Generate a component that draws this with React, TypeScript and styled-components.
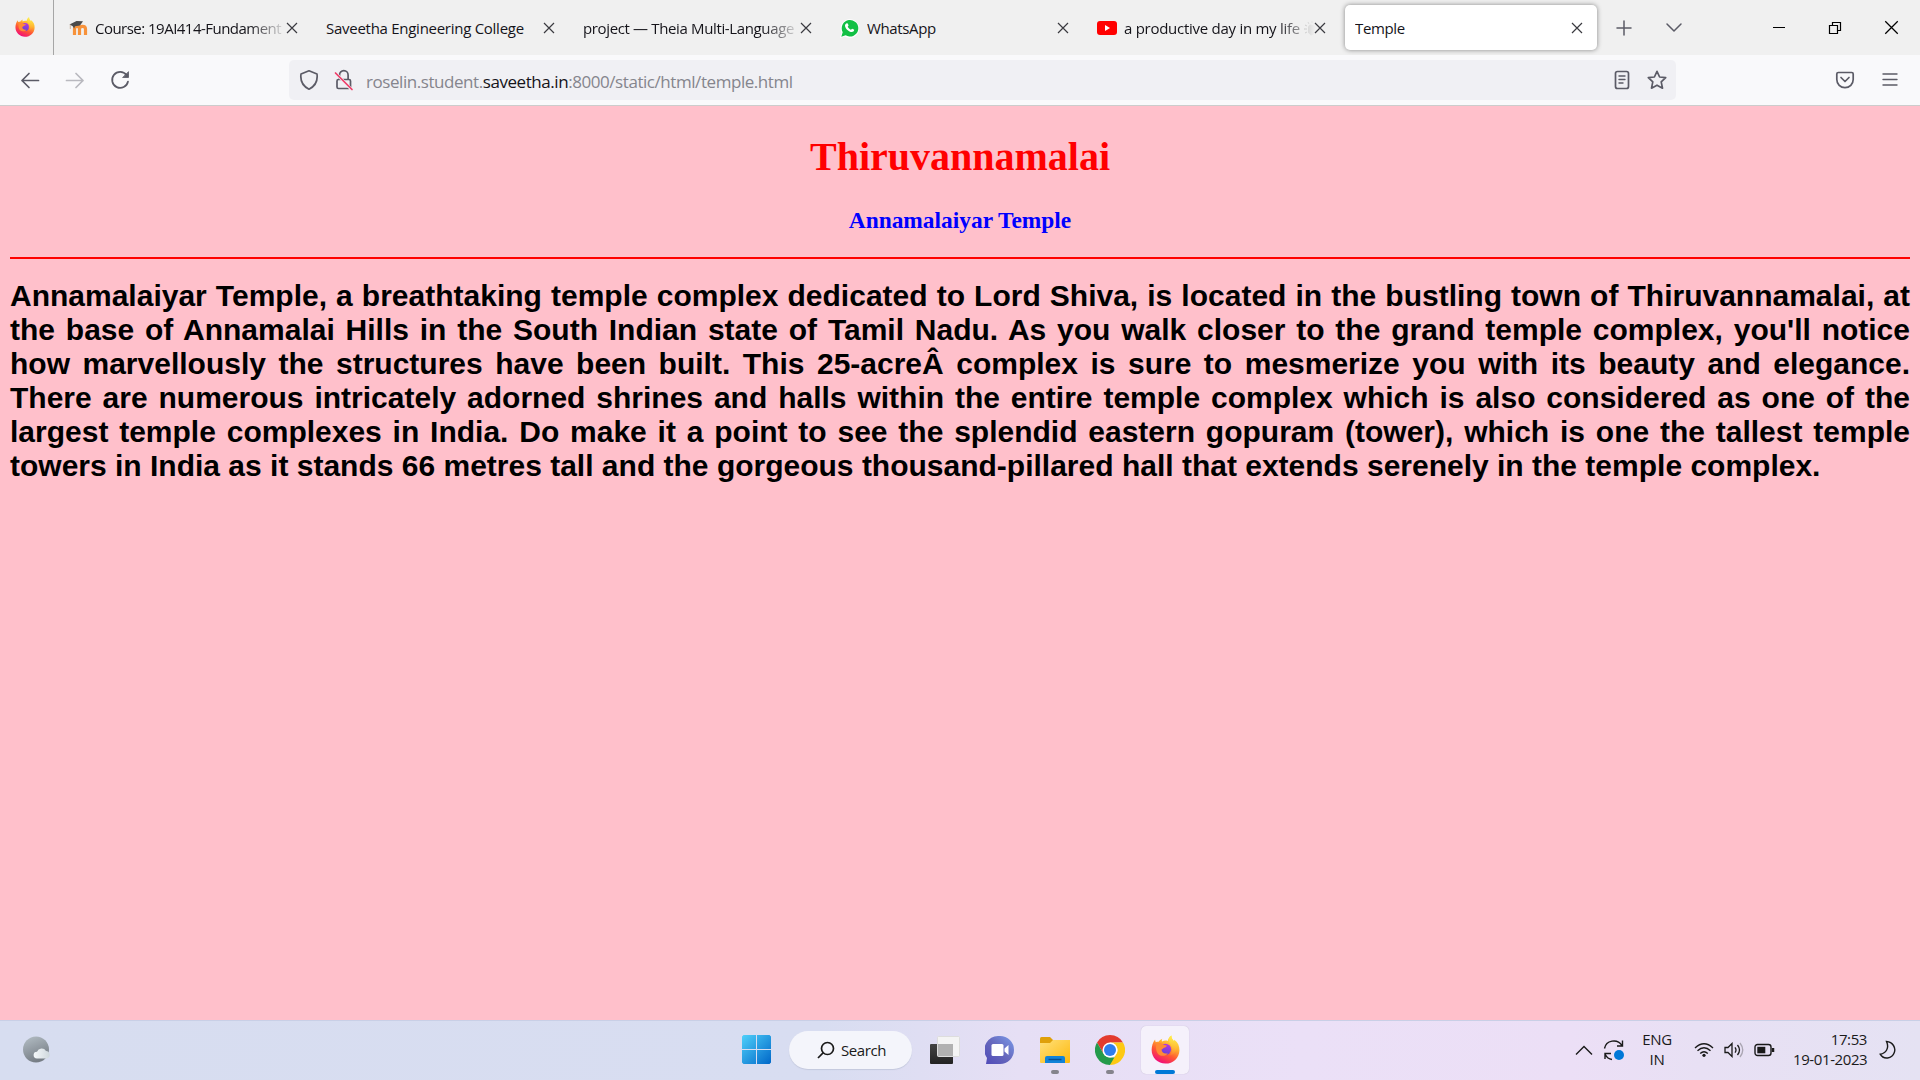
import React from "react";
import styled, { createGlobalStyle, css } from "styled-components";

const Global = createGlobalStyle`
  *{box-sizing:border-box}
  html,body{margin:0;padding:0}
  body{width:1920px;height:1080px;overflow:hidden;background:#ffc0cb;font-family:"Open Sans","Noto Sans",sans-serif}
  svg{display:block;flex:none}
`;

const Screen = styled.div`width:1920px;height:1080px;display:flex;flex-direction:column;`;

const TabStrip = styled.div`height:55px;background:#f0f0f0;display:flex;align-items:center;flex:none;`;
const Home = styled.div`width:54px;height:55px;border-right:1px solid #a6a6a6;padding:17px 0 0 15px;flex:none;`;
const Tabs = styled.div`display:flex;padding-left:6px;gap:5px;`;
const Tab = styled.div<{ $active?: boolean }>`
  width:252px;height:45px;border-radius:5px;padding:0 14px 0 9px;display:flex;align-items:center;
  ${(p) => p.$active && css`background:#fff;box-shadow:0 0 5px rgba(0,0,0,.45);padding-left:10px;`}
`;
const TabIcon = styled.span<{ $gap?: number }>`display:flex;width:19px;margin-right:${(p) => p.$gap ?? 8}px;flex:none;`;
const TabLabel = styled.span<{ $fade?: boolean; $ls?: number }>`
  flex:1;min-width:0;overflow:hidden;white-space:nowrap;font-size:15px;line-height:24px;color:#15141a;padding-top:1px;
  letter-spacing:${(p) => p.$ls ?? -0.36}px;
  ${(p) => p.$fade && css`margin-right:-1px;mask-image:linear-gradient(to right,#000 calc(100% - 38px),transparent 100%);`}
`;
const Spacer = styled.div`flex:1;`;
const StripButtons = styled.div`display:flex;align-items:center;gap:32px;padding-left:18px;`;
const WindowButtons = styled.div`display:flex;align-items:center;gap:42px;padding-right:21px;`;

const NavBar = styled.div`height:51px;background:#f9f9fb;border-bottom:1px solid #ccc;display:flex;align-items:center;flex:none;`;
const NavButtons = styled.div`display:flex;gap:25px;padding-left:20px;width:289px;`;
const UrlBar = styled.div`width:1387px;height:40px;border-radius:5px;background:#f0f0f4;display:flex;align-items:center;padding:0 9px 0 10px;`;
const Url = styled.span`font-size:17px;letter-spacing:-.44px;color:#85858d;white-space:nowrap;margin-left:12px;padding-top:2px;`;
const Host = styled.span`color:#15141a;`;
const UrlIcons = styled.div`display:flex;gap:15px;`;
const NavRight = styled.div`display:flex;gap:25px;margin-left:159px;align-items:center;`;

const Page = styled.main`flex:1;background:#ffc0cb;padding:0 10px;`;
const Title = styled.h1`margin:28px 0 0;font:bold 40px/46px "Liberation Serif","Times New Roman",serif;color:#f00;text-align:center;`;
const Subtitle = styled.h3`margin:27px 0 0;font:bold 23.4px/27px "Liberation Serif","Times New Roman",serif;color:#00f;text-align:center;`;
const Rule = styled.hr`margin:23px 0 0;border:0;height:2px;background:#f00;`;
const Story = styled.p`margin:20px 0 0;font:bold 30px/34px "Liberation Sans",Arial,sans-serif;color:#000;text-align:justify;`;

const Taskbar = styled.footer`
  height:60px;flex:none;display:flex;align-items:center;border-top:1px solid #c9cfe6;padding-bottom:2px;
  background:linear-gradient(90deg,#d7ddf0 0,#d8ddf1 820px,#e6dff5 1020px,#ebe0f7 1300px,#ecdff6 1570px,#e8e0f4 1700px,#e5e2f3 1920px);
`;
const Left = styled.div`width:742px;padding-left:22px;flex:none;`;
const Search = styled.div`
  width:123px;height:38px;border-radius:19px;background:#f4f5fb;box-shadow:0 1px 1px #c4c9dd;display:flex;align-items:center;
  padding-left:28px;gap:6px;margin:0 18px;font-size:15px;letter-spacing:-.4px;color:#1a1a1a;
`;
const Apps = styled.div`display:flex;align-items:center;`;
const AppButton = styled.div<{ $w: number; $active?: boolean; $bar?: string; $bw?: number }>`
  width:${(p) => p.$w}px;height:48px;display:flex;flex-direction:column;align-items:center;padding-top:9px;
  ${(p) => p.$active && css`background:#f5f1fb;border-radius:5px;box-shadow:0 0 1px #b8b0c8;margin-left:-9px;`}
  &::after{content:"";margin-top:auto;width:${(p) => p.$bw ?? 0}px;height:4px;border-radius:2px;background:${(p) => p.$bar ?? "none"};}
`;
const Tray = styled.div`display:flex;align-items:center;color:#1a1a1a;font-size:15px;line-height:20px;padding-right:24px;`;
const Lang = styled.div`width:30px;text-align:center;margin:-2px 22px 0 17px;letter-spacing:-.3px;`;
const Clock = styled.div`width:74px;text-align:right;margin:-2px 12px 0 18px;letter-spacing:-.4px;white-space:nowrap;`;
const TrayIcons = styled.div`display:flex;align-items:center;gap:10px;`;

const Firefox = ({ size, id }: { size: number; id: string }) => (
  <svg width={size} height={size} viewBox="0 0 32 32">
    <defs>
      <linearGradient id={id + "a"} x1=".8" y1="0" x2=".3" y2="1">
        <stop offset="0" stopColor="#fff44f" /><stop offset=".35" stopColor="#ffb22e" /><stop offset=".65" stopColor="#ff5634" /><stop offset="1" stopColor="#f0087f" />
      </linearGradient>
      <linearGradient id={id + "b"} x1=".7" y1="0" x2=".3" y2="1">
        <stop offset="0" stopColor="#b833e1" /><stop offset="1" stopColor="#5b45d6" />
      </linearGradient>
      <linearGradient id={id + "c"} x1="0" y1="0" x2="0" y2="1">
        <stop offset="0" stopColor="#fff04a" /><stop offset="1" stopColor="#ffa72e" stopOpacity=".2" />
      </linearGradient>
    </defs>
    <path fill={`url(#${id}a)`} d="M4.500 5c0 1 .2 2 .8 3 1-.5 2-.6 3-.5C9.300 5.800 10.500 5 12.500 4c-.6 1.300-.7 2.300-.3 3.200 2-1 4.200-1.300 6.300-.7C19 4 20 2 22.500.5c0 3 1.200 4.500 3 6.300.3-.5.300-1 .2-1.500C30 8.500 31.500 12.500 31.400 17 31 25.500 24.500 31.500 16 31.500S.7 25 .7 16.500C.7 12.500 2 8 4.500 5z" />
    <circle cx="16" cy="15.800" r="6.200" fill={`url(#${id}b)`} />
    <path fill="#ff8a35" d="M6 10c2-1.800 5.500-1.600 7.100.3 1 .9 2.400 1 4.400 1.200 0 1.300-1.600 2-3 2.500-1.300.6-1.800 1.600-2.900 2 .3 3.500 3.500 5.300 6.900 4-2 3.400-7.400 4-10.400 1.200C5.800 19 5 14 6 10z" />
    <path fill={`url(#${id}c)`} d="M22.500.5c-3 2-3.500 5-2.500 7.500 1 2 3.300 3.500 3.300 8 0 3-1.300 5-3 6.500 5.700-1 8.700-5.500 8.200-10.500-.3-3-1.800-5-2.800-6.700l-.2 1.500c-1.800-1.800-3-3.300-3-6.300z" />
  </svg>
);
const X = ({ s = 12, c = "#3a3a40", w = 1.2 }: { s?: number; c?: string; w?: number }) => (
  <svg width={s} height={s} viewBox="0 0 12 12" stroke={c} strokeWidth={w} fill="none"><path d="M1 1l10 10M11 1L1 11" /></svg>
);
const line = { fill: "none", stroke: "#5b5b66", strokeWidth: 1.7, strokeLinecap: "round", strokeLinejoin: "round" } as const;

const Moodle = () => (
  <svg width="19" height="16" viewBox="0 0 19 16">
    <path d="M5.500 15V9c0-3.500 5-3.500 5 0v6m0-6c0-3.500 6-3.500 6 0v6" fill="none" stroke="#f7923a" strokeWidth="3.200" />
    <path d="M.5 4.500L7.500 1l6.500.3-3 4.200-5 .8-.8 2.200L3.500 6z" fill="#4b4b4b" /><path d="M1.300 4.500V9" stroke="#c9a789" strokeWidth=".8" />
  </svg>
);
const WhatsApp = () => (
  <svg width="19" height="20" viewBox="0 0 19 20">
    <path d="M0 20l1.600-5.200A9.300 9.300 0 1 1 5 18.500z" fill="#fff" />
    <path d="M1.300 18.700l1.400-4.500A8.300 8.300 0 1 1 5.600 17.300z" fill="#12c045" />
    <path d="M6.700 5.300c.7-.3 1.100 0 1.800 2 .1.500-.6 1-.8 1.500.8 1.500 1.800 2.300 3.200 2.900.5-.2.900-1.100 1.300-1 .5 0 1.800.8 2 1.100 0 1.400-1.300 2.200-2.300 2.200-3.200-.2-6.300-3.200-6.900-6.100-.1-1 .7-2.300 1.700-2.600z" fill="#fff" />
  </svg>
);
const YouTube = () => (
  <svg width="20" height="14" viewBox="0 0 20 14"><rect width="20" height="14" rx="3" fill="#f00" /><path d="M8 4l5 3-5 3z" fill="#fff" /></svg>
);
const HandsGlyph = styled.svg`&&{display:inline-block;vertical-align:-2px;}`;
const Hands = () => (
  <HandsGlyph width="14" height="15" viewBox="0 0 14 15">
    <path d="M4 5.500l2-2 5 1v8l-4 2-3-3z" fill="#777" /><path d="M1 4l2 1M4 1l1 2M8 0v2M0 8h3M1 12l2-1" stroke="#666" />
  </HandsGlyph>
);

const tabs = [
  { label: "Course: 19AI414-Fundament", icon: <Moodle />, gap: 7, fade: true, ls: -0.52 },
  { label: "Saveetha Engineering College", ls: -0.27 },
  { label: "project — Theia Multi-Language", fade: true, ls: -0.36 },
  { label: "WhatsApp", icon: <WhatsApp />, ls: -0.36 },
  { label: "a productive day in my life ", icon: <YouTube />, fade: true, ls: -0.27, tail: <Hands /> },
  { label: "Temple", active: true, ls: -0.36 },
];

export default function App() {
  return (
    <Screen>
      <Global />
      <TabStrip>
        <Home><Firefox size={20} id="ft" /></Home>
        <Tabs>
          {tabs.map((t) => (
            <Tab key={t.label} $active={t.active}>
              {t.icon && <TabIcon $gap={t.gap}>{t.icon}</TabIcon>}
              <TabLabel $fade={t.fade} $ls={t.ls}>{t.label}{t.tail}</TabLabel>
              <X />
            </Tab>
          ))}
        </Tabs>
        <StripButtons>
          <svg width="18" height="18" {...line} strokeWidth={1.5}><path d="M9 2v14M2 9h14" /></svg>
          <svg width="18" height="18" {...line} strokeWidth={1.5}><path d="M2 5l7 7 7-7" /></svg>
        </StripButtons>
        <Spacer />
        <WindowButtons>
          <svg width="14" height="14"><path d="M1 6.500h12" stroke="#000" /></svg>
          <svg width="14" height="14" fill="none" stroke="#000" strokeWidth="1.200"><path d="M1.500 4.500h8v8h-8zM4.500 4.500v-3h8v8h-3" /></svg>
          <X s={15} c="#000" w={1} />
        </WindowButtons>
      </TabStrip>
      <NavBar>
        <NavButtons>
          <svg width="20" height="20" {...line}><path d="M18.500 10.500H2M9 3.500l-7 7 7 7" /></svg>
          <svg width="20" height="20" {...line} opacity=".4"><path d="M1.500 10.500H18M11 3.500l7 7-7 7" /></svg>
          <svg width="20" height="20" {...line}><path d="M16.500 5A8 8 0 1 0 18 11.500" /><path d="M18.500 2v5.500H13z" fill="#5b5b66" strokeWidth=".8" /></svg>
        </NavButtons>
        <UrlBar>
          <svg width="20" height="22" {...line}><path d="M10 1.800l8 3.200c.8 6-1.500 12-8 15.200C3.500 17 1.200 11 2 5z" /></svg>
          <svg width="35" height="22" viewBox="-15 0 35 22" {...line}>
            <rect x="3" y="10.500" width="13.500" height="9" rx="1.500" /><path d="M5.500 10V6a4.300 4.300 0 0 1 8.600 0v4" />
            <path d="M1 3.500l16.500 17" stroke="#f0f0f4" strokeWidth="3" /><path d="M1.500 4l16.500 16.500" stroke="#ef3d68" />
          </svg>
          <Url>roselin.student.<Host>saveetha.in</Host>:8000/static/html/temple.html</Url>
          <Spacer />
          <UrlIcons>
            <svg width="20" height="20" {...line}><rect x="3.500" y="1.500" width="13" height="17" rx="2" /><path d="M7 6h6M7 9.500h6M7 13h4" strokeWidth="1.400" /></svg>
            <svg width="20" height="20" {...line}><path d="M10 1.300l2.600 5.700 6.100.6-4.500 4.300 1.300 6.300L10 15.200l-5.500 3 1.300-6.300L1.300 7.600 7.400 7z" /></svg>
          </UrlIcons>
        </UrlBar>
        <NavRight>
          <svg width="20" height="20" {...line}><path d="M3.300 2.500h13.400c.9 0 1.500.6 1.500 1.500v5.500a8.200 8.200 0 0 1-16.400 0V4c0-.9.600-1.500 1.500-1.500z" /><path d="M6 7.500l4 4 4-4" /></svg>
          <svg width="20" height="20" {...line} strokeWidth={1.4}><path d="M3 4h14M3 9.500h14M3 15h14" /></svg>
        </NavRight>
      </NavBar>

      <Page>
        <Title>Thiruvannamalai</Title>
        <Subtitle>Annamalaiyar Temple</Subtitle>
        <Rule />
        <Story>
          Annamalaiyar Temple, a breathtaking temple complex dedicated to Lord Shiva, is located in the bustling town of Thiruvannamalai, at the base of Annamalai Hills in the South Indian state of Tamil Nadu. As you walk closer to the grand temple complex, you'll notice how marvellously the structures have been built. This 25-acreÂ complex is sure to mesmerize you with its beauty and elegance. There are numerous intricately adorned shrines and halls within the entire temple complex which is also considered as one of the largest temple complexes in India. Do make it a point to see the splendid eastern gopuram (tower), which is one the tallest temple towers in India as it stands 66 metres tall and the gorgeous thousand-pillared hall that extends serenely in the temple complex.
        </Story>
      </Page>

      <Taskbar>
        <Left>
          <svg width="30" height="28">
            <defs><linearGradient id="moon" x1="0" y1="0" x2=".4" y2="1"><stop stopColor="#b5bfc6" /><stop offset="1" stopColor="#777e86" /></linearGradient>
              <linearGradient id="cloud"><stop stopColor="#f5f8fa" /><stop offset="1" stopColor="#cfd8dd" /></linearGradient></defs>
            <circle cx="14" cy="13.500" r="13" fill="url(#moon)" />
            <path d="M15 22.500a3.400 3.400 0 0 1 0-6.800 5 5 0 0 1 9-.8 3.900 3.900 0 0 1 1 7.600z" fill="url(#cloud)" />
          </svg>
        </Left>
        <svg width="29" height="29">
          <defs><linearGradient id="win" x1="0" y1="0" x2="1" y2="1"><stop stopColor="#4fd0fa" /><stop offset="1" stopColor="#0067c8" /></linearGradient></defs>
          <path fill="url(#win)" d="M1.500 0H14v14H0V1.500zM15 0h12.500L29 1.500V14H15zM0 15h14v14H1.500L0 27.500zM15 15h14v12.500L27.500 29H15z" />
        </svg>
        <Search>
          <svg width="18" height="18" fill="none" stroke="#1a1a1a" strokeWidth="1.700"><circle cx="10.500" cy="7.500" r="6" /><path d="M6.300 11.700L1 17" /></svg>
          <span>Search</span>
        </Search>
        <Apps>
          <AppButton $w={30}>
            <svg width="30" height="30">
              <defs><linearGradient id="dk" x1="0" y1="0" x2="0" y2="1"><stop stopColor="#444" /><stop offset="1" stopColor="#222" /></linearGradient></defs>
              <rect y="9" width="23" height="20" rx="1" fill="url(#dk)" /><rect x="7.500" y="1.500" width="22" height="20" rx="1" fill="#f4f4f4" stroke="#ddd" /><path d="M8 9h15v12H8z" fill="#b1b1b1" />
            </svg>
          </AppButton>
          <AppButton $w={80}>
            <svg width="30" height="30">
              <defs><linearGradient id="chat" x1="1" y1="0" x2="0" y2="1"><stop stopColor="#7b9cea" /><stop offset=".5" stopColor="#6668bd" /><stop offset="1" stopColor="#4f4ab8" /></linearGradient></defs>
              <path d="M15 1a14 14 0 0 1 0 28H1l1-6A14 14 0 0 1 15 1z" fill="url(#chat)" /><rect x="6.500" y="9" width="12" height="12" rx="1.500" fill="#fff" /><path d="M19.500 13.500l4-3.500v10l-4-3.500z" fill="#fff" />
            </svg>
          </AppButton>
          <AppButton $w={30} $bar="#85848c" $bw={8}>
            <svg width="30" height="30">
              <defs><linearGradient id="fold" x1="0" y1="0" x2="1" y2="1"><stop stopColor="#ffe07a" /><stop offset="1" stopColor="#fdb90d" /></linearGradient></defs>
              <path d="M0 3.500Q0 2 1.500 2H10l3 3v5H0z" fill="#dfa009" /><path d="M0 8h10l3-3h17v22q0 1-1 1H1q-1 0-1-1z" fill="url(#fold)" />
              <path d="M5 28v-5q0-2 2-2h16q2 0 2 2v5z" fill="#1183d8" /><path d="M8.500 24.500h13" stroke="#084f91" strokeWidth="1.400" />
            </svg>
          </AppButton>
          <AppButton $w={80} $bar="#85848c" $bw={8}>
            <svg width="30" height="30" viewBox="0 0 30 30">
              <path d="M15 0a15 15 0 0 1 13 7.500H15L8.500 18.700 2 7.500A15 15 0 0 1 15 0z" fill="#e33b2e" />
              <path d="M2 7.500l6.500 11.250A7.500 7.500 0 0 0 15 22.500h6.500L15 30A15 15 0 0 1 2 7.500z" fill="#249a4b" />
              <path d="M28 7.500A15 15 0 0 1 15 30l6.500-11.250A7.500 7.500 0 0 0 15 7.500z" fill="#fdc913" />
              <circle cx="15" cy="15" r="7.500" fill="#fff" /><circle cx="15" cy="15" r="6" fill="#2f7ded" />
            </svg>
          </AppButton>
          <AppButton $w={48} $active $bar="#0078d7" $bw={20}><Firefox size={29} id="fb" /></AppButton>
        </Apps>
        <Spacer />
        <Tray>
          <TrayIcons>
            <svg width="18" height="12" fill="none" stroke="#1a1a1a" strokeWidth="1.400"><path d="M1 10.500L9 2.500l8 8" /></svg>
            <svg width="22" height="22" fill="none" stroke="#1a1a1a" strokeWidth="1.400">
              <path d="M1.500 9.500C3 1.500 14 -1 19 6.500M19.500 1.500v5.500H14M9 20.500C5.500 20 3.500 18 2.300 15.500M2 20v-5.500h6" /><circle cx="16" cy="16" r="5" fill="#0078d7" stroke="none" />
            </svg>
          </TrayIcons>
          <Lang>ENG<br />IN</Lang>
          <TrayIcons>
            <svg width="20" height="16" fill="none" stroke="#1a1a1a" strokeWidth="1.400"><path d="M1 6Q10-2.500 19 6M3.500 8.800q6.500-6 13 0M6.200 11.500q3.800-3.500 7.600 0" /><circle cx="10" cy="13.300" r="1.600" fill="#1a1a1a" stroke="none" /></svg>
            <svg width="20" height="16" fill="none" stroke="#1a1a1a" strokeWidth="1.300"><path d="M1 5.500h3l4-4v13l-4-4H1zM11 5.300q2 2.700 0 5.400M13.500 3q4 5 0 10" /><path d="M16 1q5.500 7 0 14" stroke="#aaa5b2" /></svg>
            <svg width="21" height="14" fill="none" stroke="#1a1a1a" strokeWidth="1.400"><rect x="1" y="1.500" width="16" height="11" rx="2.500" /><rect x="3.300" y="3.800" width="8" height="6.500" fill="#1a1a1a" stroke="none" /><path d="M19 5v4" strokeWidth="2.500" /></svg>
          </TrayIcons>
          <Clock>17:53<br />19-01-2023</Clock>
          <svg width="17" height="20" fill="none" stroke="#1a1a1a" strokeWidth="1.400"><path d="M7.500 1.500C14 2 17 8 15.300 12.500 13 19 4.500 20 1.200 14.200 7 13.500 10.500 8 7.500 1.500z" /></svg>
        </Tray>
      </Taskbar>
    </Screen>
  );
}
